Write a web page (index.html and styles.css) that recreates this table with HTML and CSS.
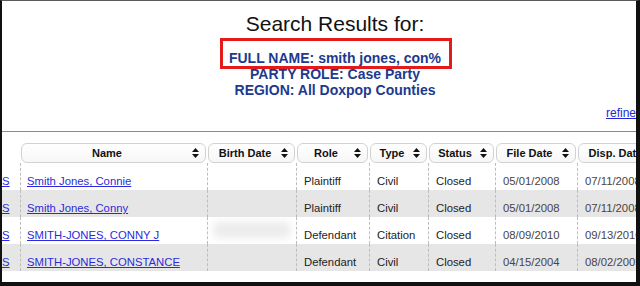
FILE: index.html
```html
<!DOCTYPE html>
<html>
<head>
<meta charset="utf-8">
<title>Search Results</title>
<link rel="stylesheet" href="styles.css">
</head>
<body>
<div class="frame">
  <div class="page">
    <header class="search-head">
      <h1 class="title">Search Results for:</h1>
      <div class="criteria">
        <div>FULL NAME: smith jones, con%</div>
        <div>PARTY ROLE: Case Party</div>
        <div>REGION: All Doxpop Counties</div>
      </div>
      <div class="highlight"></div>
      <div class="refine"><a href="#">refine</a></div>
    </header>
    <table class="results">
      <colgroup>
        <col class="c-link"><col class="c-name"><col class="c-birth"><col class="c-role"><col class="c-type"><col class="c-status"><col class="c-file"><col class="c-disp">
      </colgroup>
      <thead>
        <tr>
          <th class="th-empty"></th>
          <th><div class="th-box"><span class="th-label">Name</span><svg class="sort" viewBox="0 0 7 10" width="7" height="10"><path d="M3.5 0L7 4H0Z M0 6H7L3.5 10Z"/></svg></div></th>
          <th><div class="th-box"><span class="th-label">Birth Date</span><svg class="sort" viewBox="0 0 7 10" width="7" height="10"><path d="M3.5 0L7 4H0Z M0 6H7L3.5 10Z"/></svg></div></th>
          <th><div class="th-box"><span class="th-label">Role</span><svg class="sort" viewBox="0 0 7 10" width="7" height="10"><path d="M3.5 0L7 4H0Z M0 6H7L3.5 10Z"/></svg></div></th>
          <th><div class="th-box"><span class="th-label">Type</span><svg class="sort" viewBox="0 0 7 10" width="7" height="10"><path d="M3.5 0L7 4H0Z M0 6H7L3.5 10Z"/></svg></div></th>
          <th><div class="th-box"><span class="th-label">Status</span><svg class="sort" viewBox="0 0 7 10" width="7" height="10"><path d="M3.5 0L7 4H0Z M0 6H7L3.5 10Z"/></svg></div></th>
          <th><div class="th-box"><span class="th-label">File Date</span><svg class="sort" viewBox="0 0 7 10" width="7" height="10"><path d="M3.5 0L7 4H0Z M0 6H7L3.5 10Z"/></svg></div></th>
          <th><div class="th-box"><span class="th-label">Disp. Date</span><svg class="sort" viewBox="0 0 7 10" width="7" height="10"><path d="M3.5 0L7 4H0Z M0 6H7L3.5 10Z"/></svg></div></th>
        </tr>
      </thead>
      <tbody>
        <tr>
          <td class="td-link"><a href="#">S</a></td>
          <td><a href="#">Smith Jones, Connie</a></td>
          <td></td>
          <td>Plaintiff</td>
          <td>Civil</td>
          <td>Closed</td>
          <td class="date">05/01/2008</td>
          <td class="date">07/11/2008</td>
        </tr>
        <tr class="alt">
          <td class="td-link"><a href="#">S</a></td>
          <td><a href="#">Smith Jones, Conny</a></td>
          <td></td>
          <td>Plaintiff</td>
          <td>Civil</td>
          <td>Closed</td>
          <td class="date">05/01/2008</td>
          <td class="date">07/11/2008</td>
        </tr>
        <tr>
          <td class="td-link"><a href="#">S</a></td>
          <td><a href="#">SMITH-JONES, CONNY J</a></td>
          <td><div class="redact"></div></td>
          <td>Defendant</td>
          <td>Citation</td>
          <td>Closed</td>
          <td class="date">08/09/2010</td>
          <td class="date">09/13/2010</td>
        </tr>
        <tr class="alt">
          <td class="td-link"><a href="#">S</a></td>
          <td><a href="#">SMITH-JONES, CONSTANCE</a></td>
          <td></td>
          <td>Defendant</td>
          <td>Civil</td>
          <td>Closed</td>
          <td class="date">04/15/2004</td>
          <td class="date">08/02/2005</td>
        </tr>
      </tbody>
    </table>
  </div>
</div>
</body>
</html>
```
FILE: styles.css
```css
html, body {
  margin: 0;
  padding: 0;
  background: #ffffff;
}

body {
  font-family: "Liberation Sans", Arial, sans-serif;
}

.frame {
  width: 640px;
  height: 286px;
  box-sizing: border-box;
  border-left: 2px solid #111111;
  border-top: 1px solid #5a5a5a;
  border-right: 4px solid #111111;
  border-bottom: 4px solid #111111;
  overflow: hidden;
  background: #ffffff;
}

.page {
  width: 666px;
}

.search-head {
  position: relative;
  text-align: center;
  padding: 11px 0 11px;
  border-bottom: 1px solid #8a8a8a;
}

.title {
  margin: 0;
  font-size: 21px;
  line-height: 24px;
  font-weight: normal;
  color: #111111;
}

.criteria {
  margin-top: 14px;
  font-size: 14px;
  line-height: 16px;
  font-weight: bold;
  color: #1d3a8f;
}

.highlight {
  position: absolute;
  left: 218px;
  top: 37px;
  width: 232px;
  height: 31px;
  box-sizing: border-box;
  border: 3px solid #e31b1b;
}

.refine {
  margin-top: 8px;
  text-align: right;
  padding-right: 32px;
  font-size: 12px;
  line-height: 14px;
}

.refine a {
  color: #2626d9;
}

.results {
  width: 665px;
  table-layout: fixed;
  border-collapse: separate;
  border-spacing: 0;
  font-size: 11.3px;
  color: #222222;
}

.c-link { width: 18px; }
.c-name { width: 187px; }
.c-birth { width: 89px; }
.c-role { width: 73px; }
.c-type { width: 59px; }
.c-status { width: 67px; }
.c-file { width: 82px; }
.c-disp { width: 90px; }

.results th {
  padding: 11px 1px 0 1px;
  font-weight: bold;
  font-size: 11px;
  color: #111111;
}

.th-box {
  height: 20px;
  box-sizing: border-box;
  border: 1px solid #d2d2d2;
  border-radius: 6px;
  background: linear-gradient(#ffffff, #f7f7f7);
  display: flex;
  align-items: center;
}

.th-label {
  flex: 1;
  text-align: center;
  white-space: nowrap;
  overflow: hidden;
}

.sort {
  flex: none;
  margin-right: 6px;
  fill: #111111;
}

.results td {
  padding: 11px 7px 2px;
  line-height: 14px;
  border-left: 1px dashed #bdbdbd;
  white-space: nowrap;
  overflow: visible;
}

.results td.td-link {
  border-left: none;
  padding-left: 0;
  padding-right: 0;
}

.results td:nth-child(2) {
  padding-left: 6px;
}

.results a {
  color: #2b2bdc;
}

.results tr.alt td {
  background: #e6e6e6;
}

.results td.date {
  color: #4a4444;
}

.redact {
  height: 16px;
  margin: -6px -2px 4px;
  background: #ebebeb;
  border-radius: 6px;
  filter: blur(4px);
}
```
